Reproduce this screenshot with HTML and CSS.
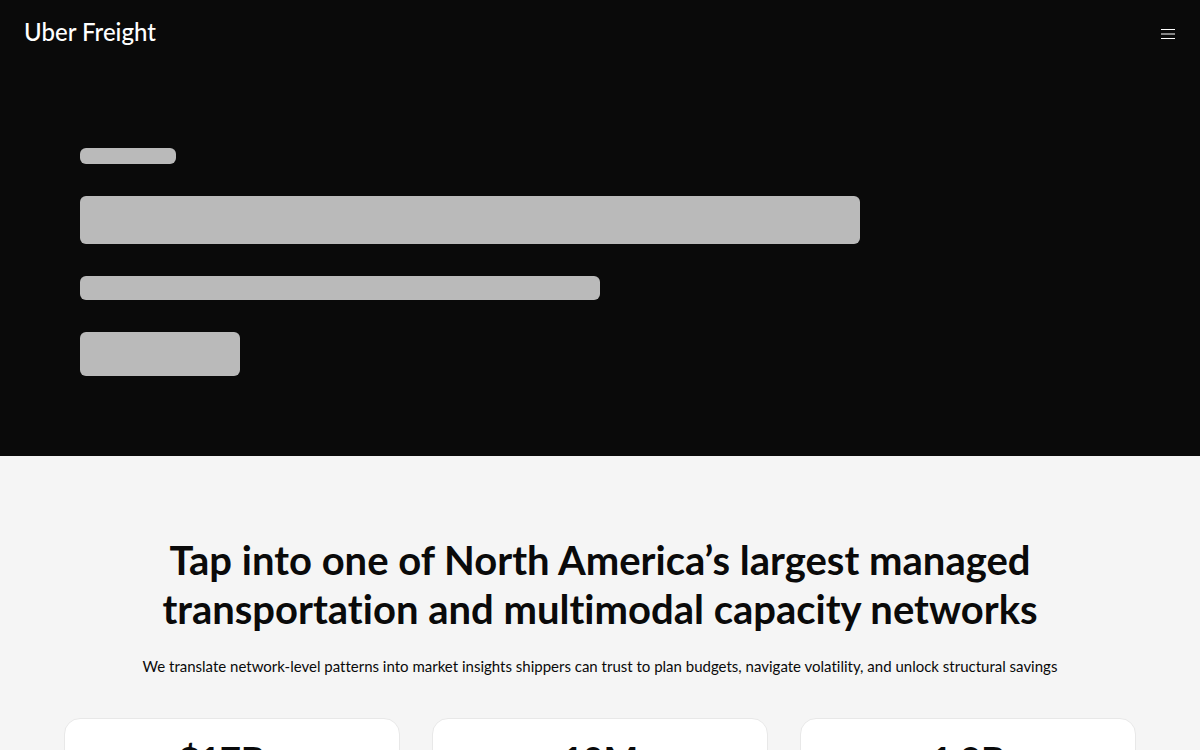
FILE: index.html
```
<!DOCTYPE html>
<html lang="en">

<head>
    <meta charset="UTF-8">
    <meta name="viewport" content="width=device-width,initial-scale=1">
    <title>Uber Freight</title>
    <link rel="stylesheet" href="styles.css">
</head>

<body>
    <header class="header">
        <a class="logo" href="#">Uber Freight</a>
        <button class="menu" type="button" aria-label="Menu">
            <svg width="14" height="12" viewBox="0 0 14 12">
                <path d="M0 1.5h14M0 6h14M0 10.5h14" stroke="currentColor" />
            </svg>
        </button>
    </header>
    <main>
        <section class="hero">
            <div class="bone tag"></div>
            <div class="bone title"></div>
            <div class="bone text"></div>
            <div class="bone action"></div>
        </section>
        <section class="network">
            <h1>Tap into one of North America’s largest managed<br>transportation and multimodal capacity networks</h1>
            <p class="intro">We translate network-level patterns into market insights shippers can trust to plan budgets, navigate volatility, and unlock structural savings</p>
            <ul class="stats">
                <li class="card"><strong>$17B+</strong></li>
                <li class="card"><strong>10M</strong></li>
                <li class="card"><strong>1.9B</strong></li>
            </ul>
        </section>
    </main>
</body>

</html>
```
FILE: styles.css
```
* {
    padding: 0;
    margin: 0;
    box-sizing: border-box;
}

body {
    font-family: Lato, "Liberation Sans", sans-serif;
    font-variant-ligatures: none;
    color: #0a0a0a;
    background: #f5f5f5;
}

.header {
    display: flex;
    align-items: center;
    justify-content: space-between;
    height: 68px;
    padding: 0 24px;
    background: #0a0a0a;
}

.logo {
    padding-bottom: 4px;
    color: #fff;
    font-size: 24px;
    font-weight: 500;
    line-height: 28px;
    text-decoration: none;
}

.menu {
    display: flex;
    padding: 1px;
    border: 0;
    color: #fff;
    background: none;
    cursor: pointer;
}

/* loading placeholder */
.hero {
    display: flex;
    flex-direction: column;
    gap: 32px;
    padding: 80px;
    background: #0a0a0a;
}

.bone {
    border-radius: 6px;
    background: #bababa;
}

.tag {
    width: 96px;
    height: 16px;
}

.title {
    width: 75%;
    height: 48px;
}

.text {
    width: 50%;
    height: 24px;
}

.action {
    width: 160px;
    height: 44px;
}

.network {
    padding: 80px 64px;
    text-align: center;
}

.network h1 {
    font-size: 40px;
    font-weight: 700;
    line-height: 49px;
}

.intro {
    margin-top: 20px;
    font-size: 15px;
    line-height: 24px;
}

.stats {
    display: grid;
    grid-template-columns: repeat(3, 1fr);
    gap: 32px;
    margin-top: 40px;
    list-style: none;
}

.card {
    padding: 16px 24px 24px;
    border: 1px solid #e8e8e8;
    border-radius: 16px;
    background: #fff;
}

.card strong {
    display: block;
    font-size: 36px;
    font-weight: 900;
    line-height: 48px;
}
```
